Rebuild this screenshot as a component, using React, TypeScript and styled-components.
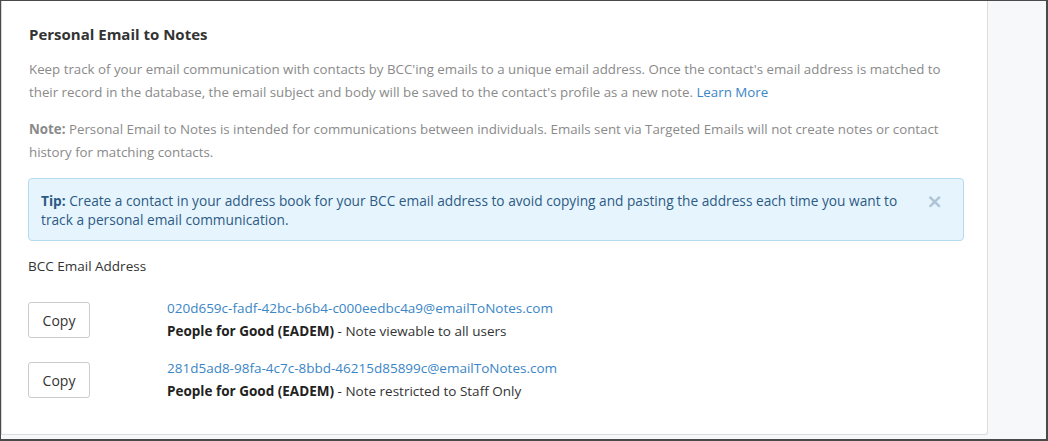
import { createGlobalStyle } from 'styled-components'
import styled from 'styled-components'

const GlobalStyle = createGlobalStyle`
  html, body {
    margin: 0;
    padding: 0;
    background: #ffffff;
  }
  body {
    font-family: "Open Sans", "Liberation Sans", sans-serif;
    font-size: 13.5px;
    color: #333333;
  }
`

const Frame = styled.div`
  box-sizing: border-box;
  width: 1048px;
  height: 441px;
  border: 1px solid #4a4a4a;
  border-right-width: 2px;
  border-bottom-width: 2px;
  background: #f7f8fa;
  display: flex;
  align-items: flex-start;
  overflow: hidden;
`

const Card = styled.section`
  box-sizing: border-box;
  width: 987px;
  height: 434px;
  background: #ffffff;
  border-left: 1px solid #d6d6d6;
  border-right: 1px solid #dcdcdc;
  border-bottom: 1px solid #dcdcdc;
  border-bottom-right-radius: 3px;
  padding: 23px 23px 0 26px;
`

const Title = styled.h3`
  margin: 0 0 14px 1px;
  font-size: 15px;
  font-weight: 700;
  line-height: 20px;
  color: #333333;
`

const Paragraph = styled.p`
  margin: 0 0 14px 1px;
  font-size: 13.3px;
  line-height: 23px;
  color: #8a8a8a;
  strong {
    font-weight: 700;
    color: #8a8a8a;
  }
`

const Link = styled.a`
  color: #3b86c6;
  text-decoration: none;
`

const Tip = styled.div`
  box-sizing: border-box;
  position: relative;
  margin-top: 1px;
  border: 1px solid #b5dbef;
  border-radius: 4px;
  background: #e6f5fd;
  color: #2d5a85;
  font-size: 13.7px;
  line-height: 19px;
  padding: 12px 42px 11px 12px;
  strong {
    font-weight: 700;
  }
`

const Dismiss = styled.button`
  position: absolute;
  right: 20px;
  top: 12px;
  border: 0;
  background: none;
  padding: 0;
  color: #aec4d6;
  font-size: 20px;
  font-weight: 700;
  line-height: 20px;
  cursor: pointer;
  font-family: "DejaVu Sans", sans-serif;
`

const Label = styled.div`
  margin-top: 15px;
  line-height: 20px;
  color: #333333;
`

const AddressList = styled.div`
  display: flex;
  flex-direction: column;
  gap: 14px;
  margin-top: 21px;
`

const AddressRow = styled.div`
  display: grid;
  grid-template-columns: 139px 1fr;
  align-items: center;
`

const CopyButton = styled.button`
  box-sizing: border-box;
  width: 62px;
  height: 36px;
  border: 1px solid #cccccc;
  border-radius: 3px;
  background: #ffffff;
  color: #333333;
  font-family: inherit;
  font-size: 14px;
  cursor: pointer;
`

const Address = styled.div`
  display: flex;
  flex-direction: column;
  line-height: 23px;
  b {
    font-weight: 700;
    color: #222222;
  }
`

const Aside = styled.div`
  flex: 1;
`

const addresses = [
  {
    email: '020d659c-fadf-42bc-b6b4-c000eedbc4a9@emailToNotes.com',
    note: 'Note viewable to all users',
  },
  {
    email: '281d5ad8-98fa-4c7c-8bbd-46215d85899c@emailToNotes.com',
    note: 'Note restricted to Staff Only',
  },
]

export default function App() {
  return (
    <>
      <GlobalStyle />
      <Frame>
        <Card>
          <Title>Personal Email to Notes</Title>
          <Paragraph>
            Keep track of your email communication with contacts by BCC'ing emails to a unique email address. Once the
            contact's email address is matched to their record in the database, the email subject and body will be saved
            to the contact's profile as a new note. <Link href="#">Learn More</Link>
          </Paragraph>
          <Paragraph>
            <strong>Note:</strong> Personal Email to Notes is intended for communications between individuals. Emails
            sent via Targeted Emails will not create notes or contact history for matching contacts.
          </Paragraph>
          <Tip>
            <strong>Tip:</strong> Create a contact in your address book for your BCC email address to avoid copying and
            pasting the address each time you want to track a personal email communication.
            <Dismiss aria-label="Dismiss">×</Dismiss>
          </Tip>
          <Label>BCC Email Address</Label>
          <AddressList>
            {addresses.map((a) => (
              <AddressRow key={a.email}>
                <CopyButton>Copy</CopyButton>
                <Address>
                  <Link href="#">{a.email}</Link>
                  <span>
                    <b>People for Good (EADEM)</b> - {a.note}
                  </span>
                </Address>
              </AddressRow>
            ))}
          </AddressList>
        </Card>
        <Aside />
      </Frame>
    </>
  )
}
